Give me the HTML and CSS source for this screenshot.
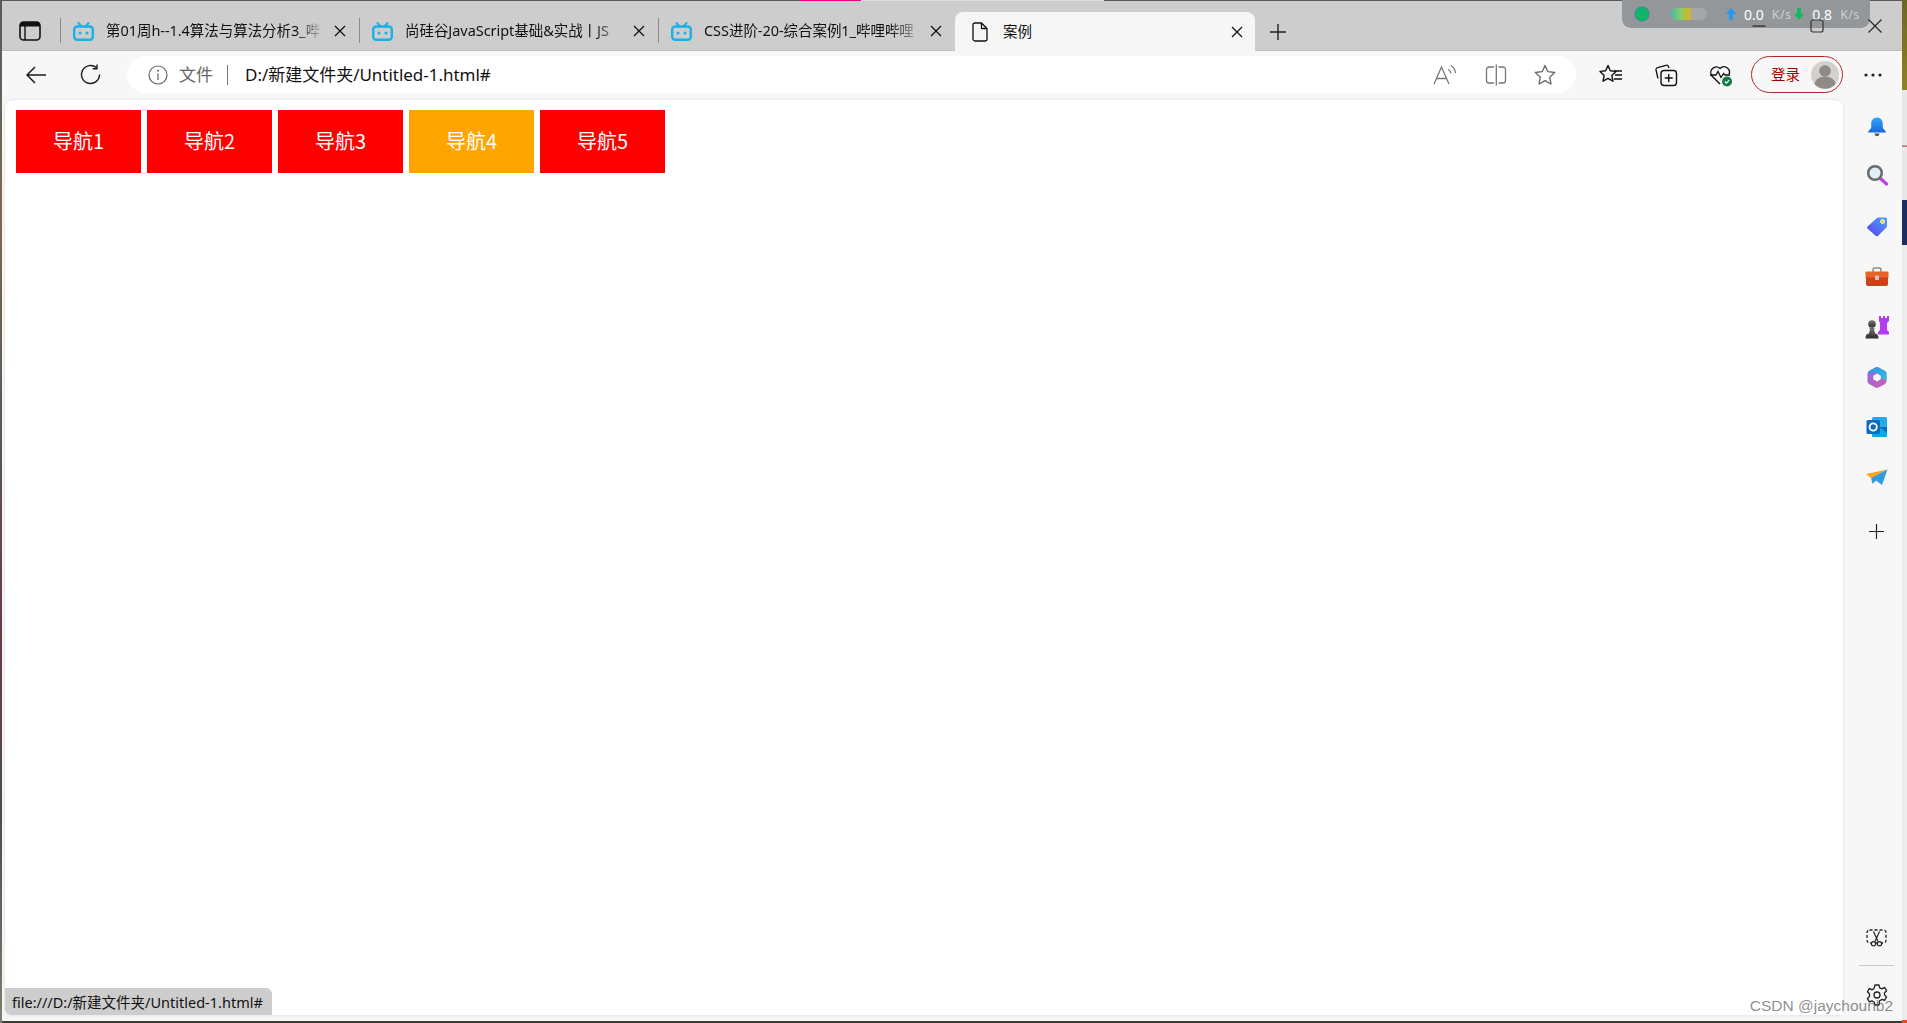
FILE: index.html
```html
<!DOCTYPE html>
<html lang="zh-CN">
<head>
<meta charset="utf-8">
<title>案例</title>
<link rel="stylesheet" href="styles.css">
</head>
<body>
<div class="desktop">
  <div class="strip-left"></div>
  <div class="window">
    <div class="tabstrip">
      <div class="tabs-button">
        <svg width="22" height="20" viewBox="0 0 22 20"><rect x="1" y="1" width="20" height="18" rx="3.5" fill="none" stroke="#111" stroke-width="1.6"/><path d="M1 5.5V4.500a3.500 3.500 0 0 1 3.500-3.500h13a3.500 3.500 0 0 1 3.500 3.500v1z" fill="#111"/><path d="M6 5v14" stroke="#111" stroke-width="1.4"/></svg>
      </div>
      <div class="tab">
        <svg class="fav" width="21" height="19" viewBox="0 0 21 19"><path d="M5.500 1l3 3.500M15.500 1l-3 3.500" stroke="#1ab0e8" stroke-width="2" stroke-linecap="round"/><rect x="1.200" y="4.500" width="18.600" height="13.300" rx="3" fill="none" stroke="#1ab0e8" stroke-width="2.400"/><circle cx="7" cy="11" r="1.500" fill="#1ab0e8"/><circle cx="14" cy="11" r="1.500" fill="#1ab0e8"/></svg>
        <span class="tab-title">第01周h--1.4算法与算法分析3_哔</span>
        <svg class="tab-close" width="12" height="12" viewBox="0 0 12 12"><path d="M1 1l10 10M11 1L1 11" stroke="#111" stroke-width="1.300"/></svg>
      </div>
      <div class="tab">
        <svg class="fav" width="21" height="19" viewBox="0 0 21 19"><path d="M5.500 1l3 3.500M15.500 1l-3 3.500" stroke="#1ab0e8" stroke-width="2" stroke-linecap="round"/><rect x="1.200" y="4.500" width="18.600" height="13.300" rx="3" fill="none" stroke="#1ab0e8" stroke-width="2.400"/><circle cx="7" cy="11" r="1.500" fill="#1ab0e8"/><circle cx="14" cy="11" r="1.500" fill="#1ab0e8"/></svg>
        <span class="tab-title">尚硅谷JavaScript基础&amp;实战丨JS</span>
        <svg class="tab-close" width="12" height="12" viewBox="0 0 12 12"><path d="M1 1l10 10M11 1L1 11" stroke="#111" stroke-width="1.300"/></svg>
      </div>
      <div class="tab tab-narrow">
        <svg class="fav" width="21" height="19" viewBox="0 0 21 19"><path d="M5.500 1l3 3.500M15.500 1l-3 3.500" stroke="#1ab0e8" stroke-width="2" stroke-linecap="round"/><rect x="1.200" y="4.500" width="18.600" height="13.300" rx="3" fill="none" stroke="#1ab0e8" stroke-width="2.400"/><circle cx="7" cy="11" r="1.500" fill="#1ab0e8"/><circle cx="14" cy="11" r="1.500" fill="#1ab0e8"/></svg>
        <span class="tab-title">CSS进阶-20-综合案例1_哔哩哔哩</span>
        <svg class="tab-close" width="12" height="12" viewBox="0 0 12 12"><path d="M1 1l10 10M11 1L1 11" stroke="#111" stroke-width="1.300"/></svg>
      </div>
      <div class="tab tab-active">
        <svg class="fav" width="16" height="20" viewBox="0 0 16 20"><path d="M3 1h6.500L15 6.500V17a2 2 0 0 1-2 2H3a2 2 0 0 1-2-2V3a2 2 0 0 1 2-2zM9.500 1v5.500H15" fill="none" stroke="#111" stroke-width="1.300" stroke-linejoin="round"/></svg>
        <span class="tab-title tab-title-plain">案例</span>
        <svg class="tab-close" width="12" height="12" viewBox="0 0 12 12"><path d="M1 1l10 10M11 1L1 11" stroke="#111" stroke-width="1.300"/></svg>
      </div>
      <svg class="new-tab" width="16" height="16" viewBox="0 0 16 16"><path d="M8 0v16M0 8h16" stroke="#222" stroke-width="1.400"/></svg>
      <div class="win-controls">
        <svg width="14" height="14" viewBox="0 0 14 14"><path d="M0.500 7h13" stroke="#222" stroke-width="1.200"/></svg>
        <svg width="14" height="14" viewBox="0 0 14 14"><rect x="1" y="1" width="12" height="12" rx="2" fill="none" stroke="#333" stroke-width="1.200"/></svg>
        <svg width="14" height="14" viewBox="0 0 14 14"><path d="M0.500 0.500l13 13M13.500 0.500l-13 13" stroke="#222" stroke-width="1.100"/></svg>
      </div>
    </div>

    <div class="toolbar">
      <span class="slot-back">
        <svg width="20" height="18" viewBox="0 0 20 18"><path d="M9 1L1 9l8 8M1 9h19" fill="none" stroke="#1a1a1a" stroke-width="1.500"/></svg>
      </span>
      <span class="slot-refresh">
        <svg width="21" height="21" viewBox="0 0 21 21"><path d="M16.500 3.800A9 9 0 1 0 19.500 10.500" fill="none" stroke="#1a1a1a" stroke-width="1.400"/><path d="M17 0.500v4.200h-4.300" fill="none" stroke="#1a1a1a" stroke-width="1.400"/></svg>
      </span>
      <div class="address">
        <svg class="info" width="20" height="20" viewBox="0 0 20 20"><circle cx="10" cy="10" r="9" fill="none" stroke="#666" stroke-width="1.200"/><path d="M10 8.500V15" stroke="#666" stroke-width="1.300"/><circle cx="10" cy="5.800" r="1" fill="#666"/></svg>
        <span class="addr-label">文件</span>
        <span class="addr-sep"></span>
        <span class="addr-url">D:/新建文件夹/Untitled-1.html#</span>
        <span class="addr-actions">
          <svg width="26" height="24" viewBox="0 0 26 24"><path d="M1 21L8.500 4 16 21M4 15.500h9" fill="none" stroke="#777" stroke-width="1.300"/><path d="M15 6.500a5 5 0 0 1 3 4M17.500 2.500a9 9 0 0 1 5 7.500" fill="none" stroke="#777" stroke-width="1.300"/></svg>
          <svg width="24" height="24" viewBox="0 0 24 24"><path d="M10 4H5a2.500 2.500 0 0 0-2.500 2.500v11A2.500 2.500 0 0 0 5 20h5M14.500 4H19a2.500 2.500 0 0 1 2.500 2.500v11A2.500 2.500 0 0 1 19 20h-4.500M12.300 1.500v21" fill="none" stroke="#777" stroke-width="1.300"/></svg>
          <svg width="24" height="24" viewBox="0 0 24 24"><path d="M12 2.500l2.900 6.200 6.800.8-5 4.700 1.300 6.800-6-3.400-6 3.400 1.300-6.800-5-4.700 6.800-.8z" fill="none" stroke="#666" stroke-width="1.300" stroke-linejoin="round"/></svg>
        </span>
      </div>
      <span class="slot-tool slot-first">
        <svg width="24" height="24" viewBox="0 0 24 24"><path d="M9 2.500l2.300 5.300 5.700.6-4.200 4 1.200 5.800L9 15.300l-5 2.900 1.200-5.800-4.200-4 5.700-.6z" fill="none" stroke="#111" stroke-width="1.400" stroke-linejoin="round"/><path d="M15 8h8M16 12h7M15 16h8" stroke="#111" stroke-width="1.400"/></svg>
      </span>
      <span class="slot-tool">
        <svg width="24" height="24" viewBox="0 0 24 24"><path d="M4 15.500L2 7a2 2 0 0 1 1.500-2.400l8.500-2.300a2 2 0 0 1 2.400 1.200l.6 1.500" fill="none" stroke="#111" stroke-width="1.300"/><rect x="7" y="7.500" width="15.500" height="15" rx="3" fill="none" stroke="#111" stroke-width="1.400"/><path d="M14.700 11v8M10.700 15h8" stroke="#111" stroke-width="1.400"/></svg>
      </span>
      <span class="slot-tool">
        <svg width="24" height="24" viewBox="0 0 24 24"><path d="M11 21L3 13a5.500 5.500 0 0 1 8-7.500 5.500 5.500 0 0 1 9 6" fill="none" stroke="#111" stroke-width="1.400"/><path d="M1 12h6l2-3.500 3 6 2.500-4 1.500 1.500h5" fill="none" stroke="#111" stroke-width="1.300"/><circle cx="18" cy="18.500" r="5" fill="#107c41"/><path d="M15.800 18.500l1.600 1.600 2.800-3" fill="none" stroke="#fff" stroke-width="1.200"/></svg>
      </span>
      <div class="signin">
        <span class="signin-text">登录</span>
        <svg class="avatar" width="28" height="28" viewBox="0 0 28 28"><circle cx="14" cy="14" r="14" fill="#d3d1cd"/><circle cx="14" cy="10" r="5.800" fill="#8f8a85"/><path d="M3.500 23a10.500 7.500 0 0 1 21 0a14 14 0 0 1-21 0z" fill="#8f8a85"/></svg>
      </div>
      <svg class="more" width="18" height="4" viewBox="0 0 18 4"><circle cx="2" cy="2" r="1.600" fill="#222"/><circle cx="9" cy="2" r="1.600" fill="#222"/><circle cx="16" cy="2" r="1.600" fill="#222"/></svg>
    </div>

    <div class="body">
      <div class="content">
        <nav class="nav">
          <a class="nav-item" href="#">导航1</a>
          <a class="nav-item" href="#">导航2</a>
          <a class="nav-item" href="#">导航3</a>
          <a class="nav-item nav-item-hover" href="#">导航4</a>
          <a class="nav-item" href="#">导航5</a>
        </nav>
        <div class="status">file:///D:/新建文件夹/Untitled-1.html#</div>
      </div>
      <aside class="sidebar">
        <span class="side-slot">
          <svg width="20" height="20" viewBox="0 0 20 20"><defs><linearGradient id="bell" x1="0" y1="0" x2="0" y2="1"><stop offset="0" stop-color="#36a4f5"/><stop offset="1" stop-color="#1468e0"/></linearGradient></defs><path d="M10 0.500c4 0 5.800 3 5.800 6.500v4l3 3.500a.6.600 0 0 1-.5 1H1.700a.6.600 0 0 1-.5-1l3-3.500V7c0-3.500 1.800-6.500 5.800-6.500z" fill="url(#bell)"/><path d="M7.500 16.500h5c-.3 1.800-1.200 2.800-2.500 2.800s-2.200-1-2.500-2.800z" fill="#4b5563"/></svg>
        </span>
        <span class="side-slot side-search">
          <svg width="22" height="22" viewBox="0 0 22 22"><path d="M14 14l6.500 6" stroke="#c93ee6" stroke-width="3.200" stroke-linecap="round"/><circle cx="9" cy="9" r="6.800" fill="#dff0f8" stroke="#6b6b6b" stroke-width="2.600"/></svg>
        </span>
        <span class="side-slot">
          <svg width="22" height="22" viewBox="0 0 22 22"><defs><linearGradient id="tag" x1="0" y1="1" x2="1" y2="0"><stop offset="0" stop-color="#5b3df0"/><stop offset="1" stop-color="#4ca6f5"/></linearGradient></defs><path d="M12.500 1.500h7a1.500 1.500 0 0 1 1.500 1.500v7a2 2 0 0 1-.6 1.400l-8.500 8.500a1.500 1.500 0 0 1-2 0L1.500 12.500a1.500 1.500 0 0 1 0-2L11 2a2 2 0 0 1 1.500-.5z" fill="url(#tag)"/><circle cx="16.500" cy="5.500" r="2" fill="#f8cf3b" stroke="#fff" stroke-width=".8"/></svg>
        </span>
        <span class="side-slot">
          <svg width="24" height="20" viewBox="0 0 24 20"><path d="M8 5V2.500A1.500 1.500 0 0 1 9.500 1h5A1.500 1.500 0 0 1 16 2.500V5" fill="none" stroke="#8a8a8a" stroke-width="1.500"/><rect x="0.500" y="4.500" width="23" height="7" rx="1" fill="#e8622a"/><path d="M1 10.500h22V17a2 2 0 0 1-2 2H3a2 2 0 0 1-2-2z" fill="#c9431a"/><rect x="10" y="8.500" width="4" height="4.500" rx=".8" fill="#c9c9c9"/></svg>
        </span>
        <span class="side-slot">
          <svg width="24" height="24" viewBox="0 0 24 24"><defs><linearGradient id="pawn" x1="0" y1="0" x2="0" y2="1"><stop offset="0" stop-color="#777"/><stop offset="1" stop-color="#2c2c2c"/></linearGradient></defs><path d="M14 1h2v2h2V1h2v2h2V1h2v5l-2 2v7l2 2v2.500H13V17l2-2V8l-1-2z" fill="#b23cf0"/><circle cx="7" cy="9" r="3.800" fill="url(#pawn)"/><path d="M4.300 12.500h5.400l-.6 2.500 1 3.500H3.900l1-3.500zM0.500 23.500c0-3 1-4.500 3-5h7c2 .5 3 2 3 5z" fill="url(#pawn)"/></svg>
        </span>
        <span class="side-slot">
          <svg width="22" height="23" viewBox="0 0 22 23"><defs><linearGradient id="hexa" x1="0" y1="0" x2="1" y2="1"><stop offset="0" stop-color="#2f8fe6"/><stop offset="1" stop-color="#2ec5d8"/></linearGradient><linearGradient id="hexb" x1="0" y1="0" x2="1" y2="1"><stop offset="0" stop-color="#8a6ae0"/><stop offset="1" stop-color="#d35fb5"/></linearGradient></defs><path d="M9.500 1.400a3 3 0 0 1 3 0l6.500 3.700a3 3 0 0 1 1.500 2.600v7.600a3 3 0 0 1-1.500 2.600l-6.500 3.700a3 3 0 0 1-3 0L3 17.900a3 3 0 0 1-1.500-2.600V7.700A3 3 0 0 1 3 5.100z" fill="url(#hexb)"/><path d="M9.500 1.400a3 3 0 0 1 3 0l6.500 3.700a3 3 0 0 1 1.500 2.600v7.300L15 11.500V9.500L9 6 3.500 8 3 5.100z" fill="url(#hexa)"/><path d="M11 7.500l3.800 2.200v3.600L11 15.500l-3.800-2.200V9.700z" fill="#f7f7f7"/></svg>
        </span>
        <span class="side-slot">
          <svg width="22" height="22" viewBox="0 0 22 22"><rect x="6" y="1" width="15" height="20" rx="1.500" fill="#28a8ea"/><path d="M6 11h15v8.500a1.500 1.500 0 0 1-1.500 1.500h-12A1.500 1.500 0 0 1 6 19.500z" fill="#14a6e8"/><path d="M13 11l8 5.500V11z" fill="#0a6cbd"/><rect x="0.500" y="4" width="13.500" height="14" rx="1.500" fill="#0f6cbd"/><circle cx="7.200" cy="11" r="3.600" fill="none" stroke="#fff" stroke-width="1.800"/></svg>
        </span>
        <span class="side-slot">
          <svg width="22" height="17" viewBox="0 0 22 17"><path d="M0 5l21.500-4.500L5 9z" fill="#f5a623"/><path d="M5 8.500L21.500 .5 6 14z" fill="#f09a1a"/><path d="M21.500 .5L16 16l-6-4.500L6.500 15 5.500 9z" fill="#2f9be6"/></svg>
        </span>
        <span class="side-slot side-plus">
          <svg width="15" height="15" viewBox="0 0 15 15"><path d="M7.500 0v15M0 7.500h15" stroke="#222" stroke-width="1.200"/></svg>
        </span>
        <span class="side-bottom">
          <svg class="side-scissors" width="21" height="18" viewBox="0 0 21 18"><rect x="1" y="1" width="19" height="13" rx="2.500" fill="none" stroke="#222" stroke-width="1.300" stroke-dasharray="3 2"/><path d="M7.500 2.500l4.500 10M13.500 2.500l-4.500 10" stroke="#222" stroke-width="1.200"/><circle cx="7.500" cy="14.700" r="2.100" fill="#f7f7f7" stroke="#222" stroke-width="1.200"/><circle cx="13.500" cy="14.700" r="2.100" fill="#f7f7f7" stroke="#222" stroke-width="1.200"/></svg>
          <span class="side-divider"></span>
          <svg class="side-gear" width="22" height="22" viewBox="0 0 22 22"><path d="M9 1h4l.7 2.900 2.300 1 2.600-1.500 2 3.400L18.500 8.700l0 2.300 2.100 1.900-2 3.500-2.600-1-2.300 1.300L13 21H9l-.7-2.800-2.300-1.300-2.600 1-2-3.500L3.500 12.500v-2.800L1.400 7.800l2-3.400L6 5.900l2.300-2z" fill="none" stroke="#222" stroke-width="1.300" stroke-linejoin="round"/><circle cx="11" cy="11" r="3" fill="none" stroke="#222" stroke-width="1.300"/></svg>
        </span>
      </aside>
      <div class="watermark">CSDN @jaychounb2</div>
    </div>
    <div class="netmeter">
      <span class="net-dot"></span>
      <span class="net-bar"><span class="net-fill"></span></span>
      <svg class="net-arrow-up" width="10" height="12" viewBox="0 0 10 12"><path d="M5 0l5 6H7v6H3V6H0z" fill="#1e9bf0"/></svg>
      <span class="net-value">0.0</span>
      <span class="net-unit">K/s</span>
      <svg class="net-arrow-down" width="10" height="12" viewBox="0 0 10 12"><path d="M5 12L0 6h3V0h4v6h3z" fill="#10b860"/></svg>
      <span class="net-value">0.8</span>
      <span class="net-unit">K/s</span>
    </div>
    <div class="accent-line"></div>
  </div>
  <div class="strip-right">
    <div class="bg-olive"></div>
    <div class="bg-light"></div>
    <div class="bg-navy"></div>
    <div class="bg-pale"></div>
    <div class="bg-end"></div>
  </div>
</div>
</body>
</html>
```
FILE: styles.css
```css
* { box-sizing: border-box; }
html, body { margin: 0; padding: 0; overflow: hidden; }
body { font-family: "Noto Sans", "Noto Sans CJK SC", sans-serif; color: #111; }
svg { display: block; flex: none; }

.desktop { display: flex; width: 1907px; height: 1023px; overflow: hidden; background: #3a3a30; }
.strip-left { width: 2px; background: linear-gradient(#5a5a5a 0, #7a6a55 20%, #5c5452 45%, #6b3a3e 62%, #4a5045 80%, #7c8070 100%); }
.window { position: relative; display: flex; flex-direction: column; width: 1900px; height: 1021px; border-top: 1px solid #5a5a5a; background: #f7f7f7; }
.accent-line { position: absolute; left: 798px; top: -1px; width: 304px; height: 1px; background: linear-gradient(to right, #e6007e 20%, #ddd 20%); }

/* tab strip */
.tabstrip { display: flex; align-items: flex-end; height: 50px; background: #cdcdcd; border-bottom: 1px solid #bdbdbd; }
.tabs-button { display: flex; align-items: center; justify-content: center; align-self: flex-start; width: 58px; height: 30px; margin-top: 15px; padding-right: 3px; }
.tab { position: relative; display: flex; align-items: center; flex: 0 0 299px; min-width: 0; height: 38px; padding: 0 13px 0 13px; font-size: 14.500px; }
.tab::before { content: ""; position: absolute; left: 0; top: 6px; width: 1px; height: 25px; background: #8a8a8a; }
.tab-narrow { flex-basis: 297px; }
.fav { margin-right: 12px; }
.tab-title { flex: 1; min-width: 0; margin-top: -3px; white-space: nowrap; -webkit-mask-image: linear-gradient(to right, #000 86%, transparent 100%); mask-image: linear-gradient(to right, #000 86%, transparent 100%); letter-spacing: -0.05px; }
.tab-title-plain { -webkit-mask-image: none; mask-image: none; }
.tab-close { margin-left: 8px; }
.tab-active { flex-basis: 300px; height: 39px; margin-bottom: -1px; padding: 0 12px 0 17px; background: #f6f6f6; border-radius: 8px 8px 0 0; }
.tab-active::before { display: none; }
.tab-active .fav { margin-right: 15px; }
.new-tab { align-self: flex-start; margin: 23px 0 0 15px; }
.win-controls { display: flex; gap: 44px; align-self: flex-start; margin: 18px 20px 0 auto; position: relative; z-index: 3; }

/* toolbar */
.toolbar { display: flex; align-items: center; height: 49px; padding-bottom: 2px; background: #f7f7f7; }
.slot-back { display: flex; justify-content: center; width: 58px; padding-left: 16px; padding-right: 6px; }
.slot-refresh { display: flex; justify-content: center; width: 50px; padding-left: 11px; }
.address { display: flex; align-items: center; width: 1449px; height: 37px; margin-left: 17px; padding: 0 19px 0 21px; background: #fff; border-radius: 19px; }
.addr-label { margin-left: 11px; margin-top: -2px; font-size: 17px; color: #666; }
.addr-sep { width: 1px; height: 20px; margin-left: 14px; background: #777; }
.addr-url { margin-left: 17px; margin-top: -2px; font-size: 17px; color: #111; letter-spacing: -0.02px; }
.addr-actions { display: flex; align-items: center; gap: 25px; margin-left: auto; }
.slot-tool { display: flex; justify-content: center; width: 55px; }
.slot-first { margin-left: 7px; }
.signin { display: flex; align-items: center; justify-content: space-between; width: 92px; height: 37px; margin-left: 3px; padding: 0 3px 0 19px; border: 1.500px solid #b02a2a; border-radius: 19px; }
.signin-text { margin-top: -2px; font-size: 14.500px; color: #a80000; }
.more { margin-left: 21px; }

/* body */
.body { position: relative; display: flex; flex: 1; min-height: 0; }
.content { position: relative; flex: none; width: 1838px; height: 915px; margin-left: 3px; background: #fff; border-radius: 8px 8px 0 0; box-shadow: 0 0 3px rgba(0,0,0,.12); padding: 10px 11px; }
.nav { display: flex; gap: 6px; }
.nav-item { display: flex; align-items: center; justify-content: center; width: 125px; height: 63px; padding-bottom: 2px; background: #f00; color: #fff; font-size: 20px; font-family: "Noto Sans CJK SC", "Noto Sans", sans-serif; font-weight: 400; text-decoration: none; }
.nav-item-hover { background: #ffa500; }
.status { position: absolute; left: 0; bottom: 0; display: flex; align-items: center; width: 267px; height: 27px; padding-left: 7px; background: #cdcdcd; border-radius: 0 6px 0 6px; font-size: 14.500px; color: #111; white-space: nowrap; }

/* sidebar */
.sidebar { display: flex; flex-direction: column; align-items: center; flex: 1; padding: 2px 0 0 8px; }
.side-slot { display: flex; align-items: center; justify-content: center; flex: none; width: 100%; height: 50px; }
.side-search { margin-top: -2px; margin-bottom: 2px; }
.side-plus { margin-top: 4px; }
.side-bottom { display: flex; flex-direction: column; align-items: center; margin-top: auto; width: 100%; padding-bottom: 15px; }
.side-divider { width: 35px; height: 1px; margin: 18px 0 18px; background: #c8c8c8; }

.watermark { position: absolute; right: 9px; bottom: 6px; font-family: "Liberation Sans", sans-serif; font-size: 15.500px; color: rgba(70,70,70,.62); white-space: nowrap; }

/* network meter overlay */
.netmeter { position: absolute; left: 1620px; top: -1px; display: flex; align-items: center; width: 248px; height: 28px; padding-left: 13px; background: #94979a; border-radius: 0 0 9px 9px; font-family: "Noto Sans", sans-serif; font-size: 14px; }
.net-dot { width: 14px; height: 14px; border-radius: 50%; background: #10b56c; box-shadow: 0 0 0 .5px #4a6fb0; }
.net-bar { display: block; width: 36px; height: 12px; margin-left: 22px; border-radius: 6px; background: #a4a6a8; overflow: hidden; }
.net-fill { display: block; width: 20px; height: 12px; background: linear-gradient(to right, #3cc0b0, #8fca60, #e0b020); }
.net-arrow-up { margin-left: 19px; }
.net-arrow-down { margin-left: 3px; }
.net-value { margin-left: 8px; color: #fff; }
.net-unit { margin-left: 8px; font-size: 12.500px; color: #cfcfcf; letter-spacing: .4px; }

/* backdrop right of the window */
.strip-right { display: flex; flex-direction: column; flex: 1; }
.bg-olive { height: 90px; background: linear-gradient(#6c6820, #8f8226); }
.bg-light { height: 110px; background: linear-gradient(#e8e8e8 50%, #a84040 51%, #e8e8e8 52%); }
.bg-navy { height: 45px; background: #1c2c5c; }
.bg-pale { flex: 1; background: #ececec; }
.bg-end { height: 3px; background: #d9541e; }
```
